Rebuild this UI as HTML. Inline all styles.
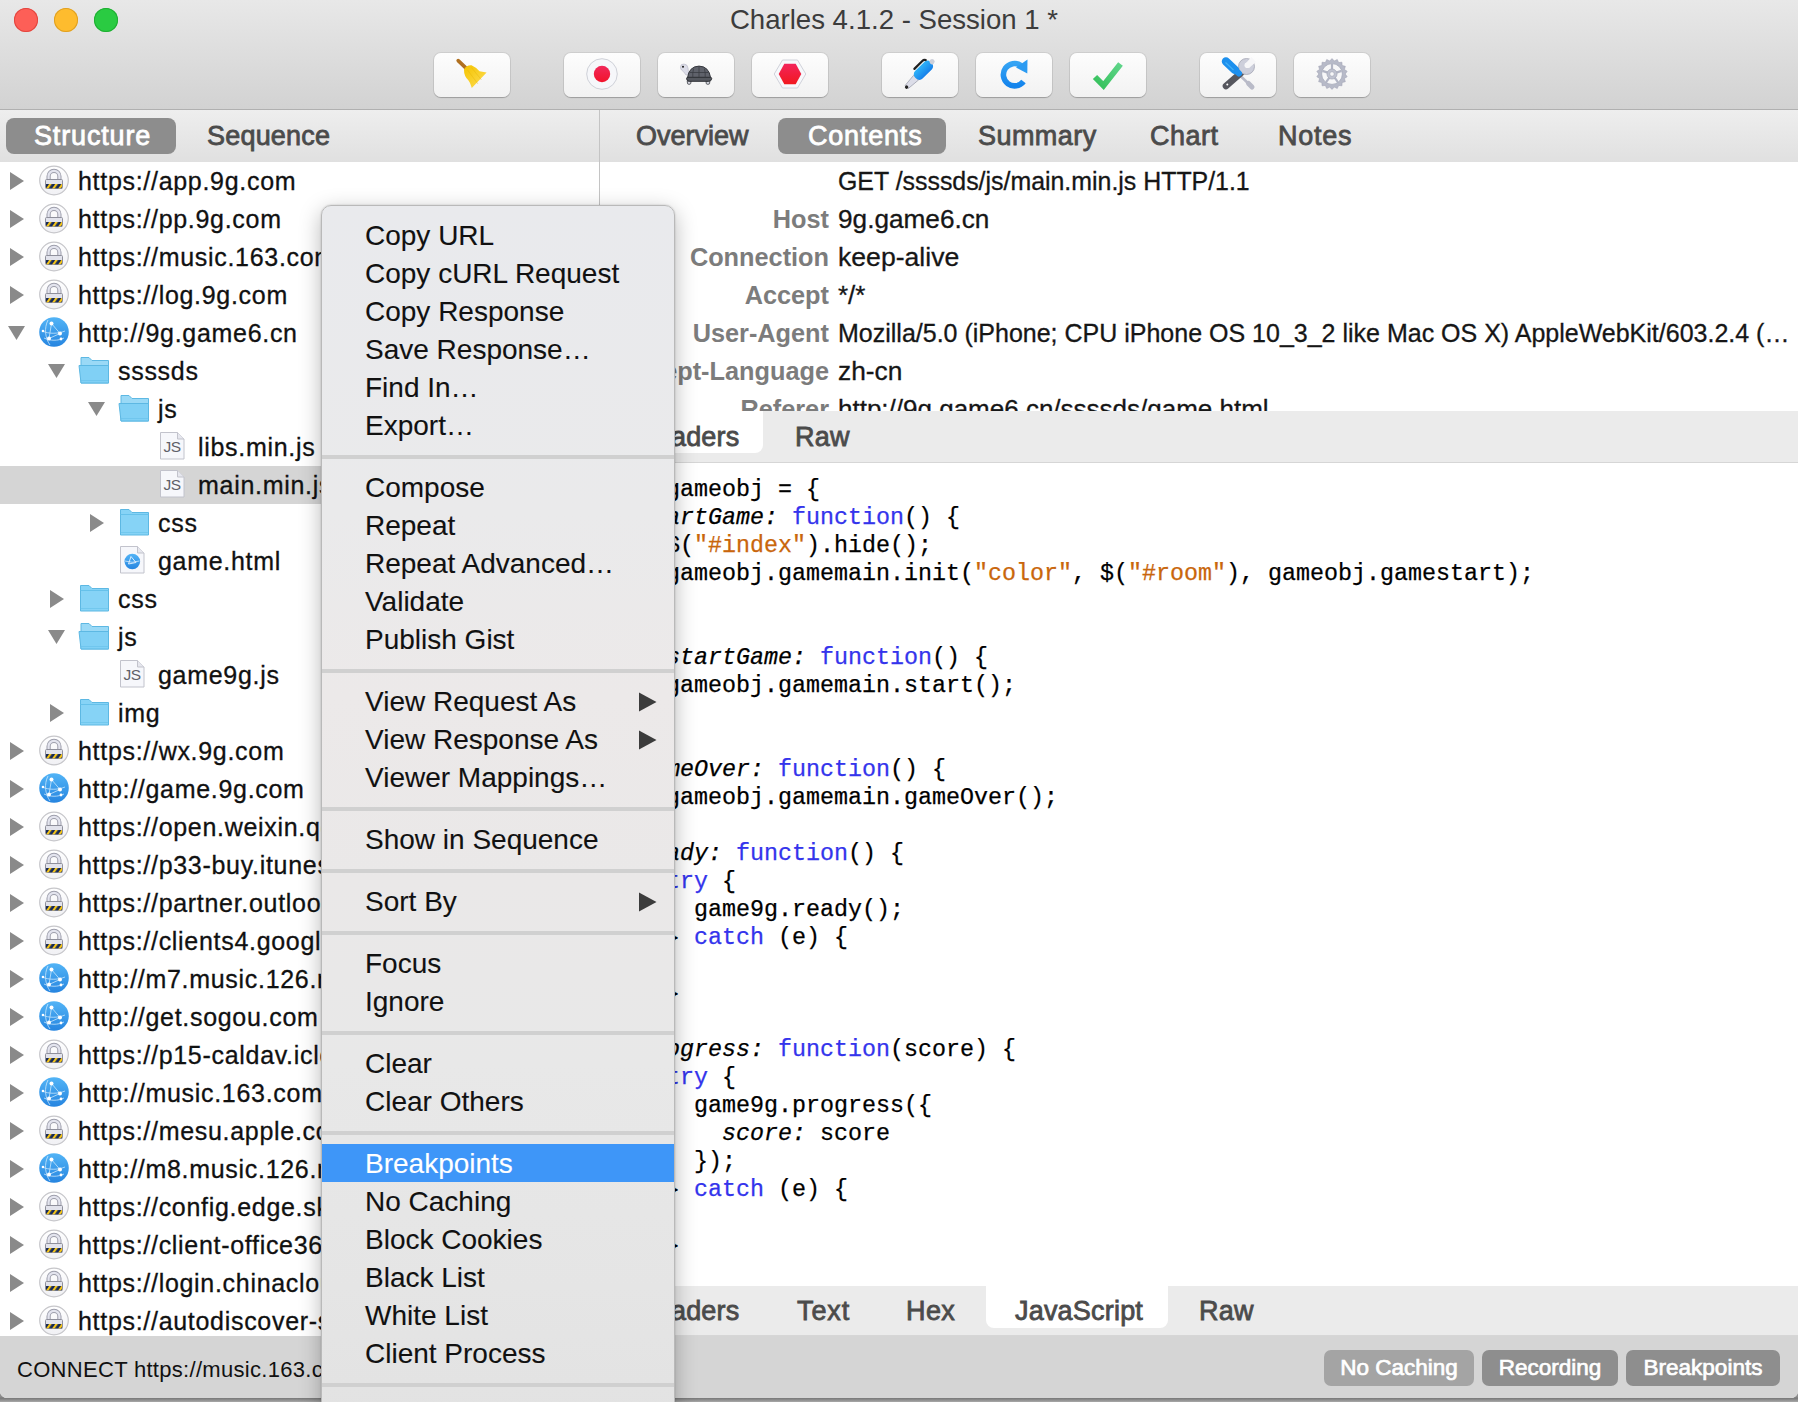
<!DOCTYPE html><html><head><meta charset="utf-8"><style>
*{margin:0;padding:0;box-sizing:border-box}
html,body{width:1798px;height:1402px;overflow:hidden;background:linear-gradient(to bottom,#8d8d8d 0,#8d8d8d 1397px,#777 1398px,#a8a8a8 1402px);font-family:"Liberation Sans",sans-serif}
#win{position:absolute;left:0;top:0;width:1798px;height:1398px;background:#fff;border-radius:0 0 7px 7px;overflow:hidden}
.a{position:absolute;white-space:nowrap}
#toolbar{position:absolute;left:0;top:0;width:1798px;height:110px;background:linear-gradient(#e8e8e8,#d2d2d2);border-bottom:1px solid #b0b0b0}
.tl{position:absolute;top:8px;width:24px;height:24px;border-radius:50%}
#title{position:absolute;left:-5px;width:1798px;top:0;text-align:center;font-size:27.6px;color:#3c3c3c;line-height:40px}
.btn{position:absolute;top:53px;width:76px;height:44px;border-radius:7px;background:linear-gradient(#fdfdfd,#f2f2f2);box-shadow:0 0 0 1px rgba(0,0,0,.07),0 1px 1px rgba(0,0,0,.2)}
.btn svg{position:absolute;left:0;top:0}
.tabbar{position:absolute;top:110px;height:52px;background:linear-gradient(#eeeeee,#e0e0e0)}
.pill{position:absolute;top:8px;height:36px;border-radius:8px;background:#8d8d8d}
.tab{position:absolute;top:0;height:52px;line-height:53px;font-size:27px;color:#4b4b4b;-webkit-text-stroke:0.8px #4b4b4b;letter-spacing:0.2px;white-space:nowrap}
.tab.sel{color:#fff;-webkit-text-stroke:0.8px #fff}
#tree{position:absolute;left:0;top:162px;width:599px;height:1174px;background:#fff;overflow:hidden}
.row{position:absolute;left:0;width:599px;height:38px}
.row .t{position:absolute;top:0;line-height:38px;font-size:25px;letter-spacing:0.7px;color:#111;-webkit-text-stroke:0.3px #111;white-space:nowrap}
.row svg{position:absolute;top:0;left:0}
#divider{position:absolute;left:599px;top:110px;width:1px;height:1226px;background:#c4c4c4}
#status{position:absolute;left:0;top:1336px;width:1798px;height:62px;background:#d5d5d5}
.hk{position:absolute;right:969px;height:38px;line-height:38px;font-size:25.3px;font-weight:bold;color:#7c7c7c;white-space:nowrap}
.hv{position:absolute;left:238px;height:38px;line-height:38px;font-size:25px;color:#161616;-webkit-text-stroke:0.3px #161616;white-space:nowrap}
.subbar{position:absolute;left:600px;width:1198px;background:#ebebeb;border-bottom:1px solid #d6d6d6}
.stab{position:absolute;line-height:52px;font-size:27px;color:#4b4b4b;-webkit-text-stroke:0.8px #4b4b4b;letter-spacing:0.2px;white-space:nowrap}
.cl{position:absolute;left:10px;height:28px;line-height:28px;font-family:"Liberation Mono",monospace;font-size:23.33px;color:#000;-webkit-text-stroke:0.25px currentColor;white-space:pre}
.kw{color:#3434ec}.st{color:#c9660c}.it{font-style:italic}
#status .txt{position:absolute;left:17px;top:0;line-height:67px;font-size:22px;letter-spacing:0.3px;color:#111;white-space:nowrap}
.spill{position:absolute;top:14px;height:36px;border-radius:7px;background:#8e8e8e;color:#fff;font-size:22.5px;-webkit-text-stroke:0.7px #fff;line-height:36px;text-align:center;white-space:nowrap}
#menu{position:absolute;left:321px;top:205px;width:354px;height:1230px;border-radius:10px;background:linear-gradient(#e9eaed 0%,#eaeaeb 25%,#ece9e9 40%,#eae8e8 55%,#e8e8e8 70%,#e5e5e5 88%,#e2e2e2 100%);border:1px solid #b9b9b9;box-shadow:0 6px 22px rgba(0,0,0,.28),0 0 2px rgba(0,0,0,.2)}
.mi{position:absolute;left:43px;height:38px;line-height:38px;font-size:28px;color:#111;-webkit-text-stroke:0.1px #111;white-space:nowrap}
.mi.sel{color:#fff;-webkit-text-stroke:0.1px #fff}
.mhl{position:absolute;left:0;width:352px;height:38px;background:#3e96f8}
.msep{position:absolute;left:0;width:352px;height:4px;background:#d0d0d0}
.marr{position:absolute;left:316px}

</style></head><body><div id="win">
<div id="toolbar">
<div class="tl" style="left:14px;background:#fd5f57;box-shadow:inset 0 0 0 1px #e2463f"></div>
<div class="tl" style="left:54px;background:#febc2e;box-shadow:inset 0 0 0 1px #dfa023"></div>
<div class="tl" style="left:94px;background:#2acb42;box-shadow:inset 0 0 0 1px #1fae32"></div>
<div id="title">Charles 4.1.2 - Session 1 *</div>
<div class="btn" style="left:434px"><svg width="76" height="44"><defs><linearGradient id="gBroom" x1="0" y1="0" x2="1" y2="1"><stop offset="0" stop-color="#f5c400"/><stop offset="1" stop-color="#fddd55"/></linearGradient></defs>
<path d="M24.2 7.6 L31.5 14.6" stroke="#b07020" stroke-width="3.6" stroke-linecap="round"/>
<path d="M30 16.5 Q32.5 12 37.5 12.3 Q42 14.3 45.5 18.3 L52.6 19.4 L37.8 35 Q36.3 29.5 34.5 27.5 Q29.8 23 30 16.5 Z" fill="url(#gBroom)"/>
<path d="M33.5 17 L44 31 M37.5 14.5 L47.5 27" stroke="#e6b000" stroke-width="0.7" opacity=".5"/>
</svg></div>
<div class="btn" style="left:564px"><svg width="76" height="44"><defs><linearGradient id="gRec" x1="0" y1="0" x2="0" y2="1"><stop offset="0" stop-color="#f0285a"/><stop offset="1" stop-color="#f2132b"/></linearGradient></defs>
<circle cx="38" cy="21" r="15.3" fill="#f6f7fa" stroke="#cfd1d8" stroke-width="1"/>
<circle cx="38" cy="21" r="8.2" fill="url(#gRec)"/></svg></div>
<div class="btn" style="left:658px"><svg width="76" height="44">
<path d="M22.5 14 Q22.5 10.8 26 11 Q29.5 11.2 30 15 Q30.6 18.5 30.5 21.5 L28 22 Q25.5 18 23.5 17 Q22.4 16 22.5 14 Z" fill="#dcdde8" stroke="#b5b6c4" stroke-width="0.6"/>
<circle cx="25" cy="13.8" r="1" fill="#1a1a1a"/>
<path d="M29.2 28 L29.6 30.8 Q31 32 32.6 30.8 L33.2 28 Z" fill="#d6d7e0" stroke="#505258" stroke-width="0.9"/>
<path d="M48 28 L48.3 30.8 Q49.9 32 51.5 30.8 L51.9 28 Z" fill="#d6d7e0" stroke="#505258" stroke-width="0.9"/>
<path d="M29.5 24.8 Q31 13.4 41 13.1 Q51 13.4 52.6 24.8 Z" fill="#5f626b" stroke="#34363c" stroke-width="1"/>
<path d="M28.6 25.4 Q28.6 24.3 30 24.3 H52.2 Q53.7 24.3 53.7 25.5 Q53.5 28.3 50.5 28.3 H31.5 Q28.6 28.3 28.6 25.4 Z" fill="#55585f" stroke="#2e3035" stroke-width="1"/>
<path d="M35.5 15.8 Q34.5 20 34.8 24.3 M41 13.4 V24.3 M46.5 15.8 Q47.5 20 47.2 24.3 M31.5 19.5 H50.5" stroke="#3a3c42" stroke-width="0.8" fill="none"/>
</svg></div>
<div class="btn" style="left:752px"><svg width="76" height="44"><defs><linearGradient id="gHex" x1="0" y1="0" x2="0" y2="1"><stop offset="0" stop-color="#f3245b"/><stop offset="1" stop-color="#f1181f"/></linearGradient></defs>
<path d="M30.5 7 H45.5 L53.8 21 L45.5 35 H30.5 L22.2 21 Z" fill="#f7f8fb" stroke="#d0d2da" stroke-width="1"/>
<path d="M32.3 10.8 H43.7 L49.3 21 L43.7 31.2 H32.3 L26.7 21 Z" fill="url(#gHex)"/></svg></div>
<div class="btn" style="left:882px"><svg width="76" height="44"><defs><linearGradient id="gPen" x1="0" y1="0" x2="0" y2="1"><stop offset="0" stop-color="#2fb3f8"/><stop offset="1" stop-color="#1680ea"/></linearGradient></defs>
<g transform="translate(23.9,34.8) rotate(-45)">
<path d="M1.2 -2.2 L14.5 -3.4 L14.5 3.4 L1.2 2.2 Z" fill="#dcdde8" stroke="#a3a5b2" stroke-width="0.8"/>
<circle cx="1" cy="0" r="1.7" fill="#222"/>
<rect x="13.8" y="-5.3" width="22" height="10.6" rx="4.5" fill="url(#gPen)"/>
<circle cx="37" cy="0" r="2.6" fill="#cdd0da"/>
<path d="M19.4 -7.4 L30.6 -7.4 Q32.8 -7.4 33.6 -5.6" stroke="#222" stroke-width="2.2" fill="none" stroke-linecap="round"/>
</g></svg></div>
<div class="btn" style="left:976px"><svg width="76" height="44"><defs><linearGradient id="gRef" x1="0" y1="0" x2="0" y2="1"><stop offset="0" stop-color="#35a4f4"/><stop offset="1" stop-color="#1484ec"/></linearGradient></defs>
<path d="M47.5 28.5 A11.2 11.2 0 1 1 45 12.5" stroke="url(#gRef)" stroke-width="5.6" fill="none"/>
<path d="M40 14.5 L51.5 6.5 L51.3 20.5 Z" fill="#2b9bf2"/></svg></div>
<div class="btn" style="left:1070px"><svg width="76" height="44"><defs><linearGradient id="gChk" x1="0" y1="1" x2="1" y2="0"><stop offset="0" stop-color="#34c05a"/><stop offset="1" stop-color="#5fd58a"/></linearGradient></defs>
<path d="M25 24 L33.5 32.5 L50.5 11" stroke="url(#gChk)" stroke-width="6" fill="none" stroke-linejoin="miter"/></svg></div>
<div class="btn" style="left:1200px"><svg width="76" height="44">
<path d="M39.5 22 L51.5 33.5" stroke="#b9bbc8" stroke-width="2.6" stroke-linecap="round"/>
<path d="M48.5 30.5 L52 34" stroke="#b9bbc8" stroke-width="5" stroke-linecap="round"/>
<path d="M26 33 L42 19" stroke="#56575e" stroke-width="6.6" stroke-linecap="round"/>
<circle cx="46.5" cy="13.5" r="8" fill="#cdcfdb" stroke="#a4a6b4" stroke-width=".8"/>
<path d="M45 11 L51.5 4 L56 9 L49 15 Z" fill="#f6f6f8"/>
<circle cx="47.3" cy="12.3" r="2.8" fill="#f6f6f8"/>
<path d="M26 8.5 L35 17" stroke="#1d90ee" stroke-width="8.5" stroke-linecap="round"/>
<path d="M33 15 L39 20.5" stroke="#1d90ee" stroke-width="6" stroke-linecap="round"/>
<path d="M25.5 9.5 L33.5 17" stroke="#52bdf8" stroke-width="1.2" opacity=".7"/>
<circle cx="27.3" cy="31.6" r="1" fill="#fff"/></svg></div>
<div class="btn" style="left:1294px"><svg width="76" height="44"><polygon points="38.00,5.60 40.29,8.00 43.27,6.53 44.60,9.57 47.90,9.20 48.11,12.52 51.34,13.30 50.40,16.49 53.17,18.33 51.20,21.00 53.17,23.67 50.40,25.51 51.34,28.70 48.11,29.48 47.90,32.80 44.60,32.43 43.27,35.47 40.29,34.00 38.00,36.40 35.71,34.00 32.73,35.47 31.40,32.43 28.10,32.80 27.89,29.48 24.66,28.70 25.60,25.51 22.83,23.67 24.80,21.00 22.83,18.33 25.60,16.49 24.66,13.30 27.89,12.52 28.10,9.20 31.40,9.57 32.73,6.53 35.71,8.00" fill="#b7bac8" stroke="#a2a5b5" stroke-width="0.6"/>
<circle cx="38" cy="21" r="10.4" fill="#f7f7f8" stroke="#a6a9b9" stroke-width="0.8"/>
<path d="M38.00 16.50 L38.00 11.00" stroke="#b2b5c4" stroke-width="2.2"/><path d="M42.28 19.61 L47.51 17.91" stroke="#b2b5c4" stroke-width="2.2"/><path d="M40.65 24.64 L43.88 29.09" stroke="#b2b5c4" stroke-width="2.2"/><path d="M35.35 24.64 L32.12 29.09" stroke="#b2b5c4" stroke-width="2.2"/><path d="M33.72 19.61 L28.49 17.91" stroke="#b2b5c4" stroke-width="2.2"/><circle cx="38" cy="21" r="5" fill="#c0c3d0" stroke="#a6a9b9" stroke-width="0.8"/><circle cx="38" cy="21" r="2.3" fill="#f7f7f8" stroke="#a6a9b9" stroke-width="0.7"/></svg></div>
</div>
<div class="tabbar" style="left:0;width:599px">
<div class="pill" style="left:6px;width:170px"></div>
<div class="tab sel" style="left:34px;letter-spacing:0.85px">Structure</div>
<div class="tab" style="left:207px">Sequence</div>
</div>
<div class="tabbar" style="left:600px;width:1198px">
<div class="pill" style="left:178px;width:168px"></div>
<div class="tab" style="left:36px;letter-spacing:0.00px">Overview</div>
<div class="tab sel" style="left:208px;letter-spacing:0.80px">Contents</div>
<div class="tab" style="left:378px;letter-spacing:0.45px">Summary</div>
<div class="tab" style="left:550px;letter-spacing:0.50px">Chart</div>
<div class="tab" style="left:678px;letter-spacing:0.75px">Notes</div>
</div>
<div id="tree">
<div class="row" style="top:0px">
<svg width="120" height="38" style="left:0px" viewBox="0 0 120 38"><path d="M10 10 L24 19 L10 28 Z" fill="#8a8a8a"/></svg>
<svg width="40" height="38" style="left:34px" viewBox="0 0 40 38">
   <circle cx="20" cy="18.5" r="14.3" fill="url(#gLockBg)" stroke="#c6c6ca" stroke-width="1.2"/>
   <path d="M14.6 17.8 V14.2 A5.4 5.4 0 0 1 25.4 14.2 V17.8" fill="none" stroke="#9d9eab" stroke-width="4.2"/>
   <path d="M14.6 17.8 V14.2 A5.4 5.4 0 0 1 25.4 14.2 V17.8" fill="none" stroke="#e3e4ee" stroke-width="2.2"/>
   <rect x="11.5" y="17.5" width="17" height="9" rx="1" fill="#e2e3ec" stroke="#8f909c" stroke-width="1"/>
   <rect x="12" y="22" width="16" height="4.3" fill="url(#pStripe)"/>
 </svg>
<div class="t" style="left:78px">https://app.9g.com</div>
</div>
<div class="row" style="top:38px">
<svg width="120" height="38" style="left:0px" viewBox="0 0 120 38"><path d="M10 10 L24 19 L10 28 Z" fill="#8a8a8a"/></svg>
<svg width="40" height="38" style="left:34px" viewBox="0 0 40 38">
   <circle cx="20" cy="18.5" r="14.3" fill="url(#gLockBg)" stroke="#c6c6ca" stroke-width="1.2"/>
   <path d="M14.6 17.8 V14.2 A5.4 5.4 0 0 1 25.4 14.2 V17.8" fill="none" stroke="#9d9eab" stroke-width="4.2"/>
   <path d="M14.6 17.8 V14.2 A5.4 5.4 0 0 1 25.4 14.2 V17.8" fill="none" stroke="#e3e4ee" stroke-width="2.2"/>
   <rect x="11.5" y="17.5" width="17" height="9" rx="1" fill="#e2e3ec" stroke="#8f909c" stroke-width="1"/>
   <rect x="12" y="22" width="16" height="4.3" fill="url(#pStripe)"/>
 </svg>
<div class="t" style="left:78px">https://pp.9g.com</div>
</div>
<div class="row" style="top:76px">
<svg width="120" height="38" style="left:0px" viewBox="0 0 120 38"><path d="M10 10 L24 19 L10 28 Z" fill="#8a8a8a"/></svg>
<svg width="40" height="38" style="left:34px" viewBox="0 0 40 38">
   <circle cx="20" cy="18.5" r="14.3" fill="url(#gLockBg)" stroke="#c6c6ca" stroke-width="1.2"/>
   <path d="M14.6 17.8 V14.2 A5.4 5.4 0 0 1 25.4 14.2 V17.8" fill="none" stroke="#9d9eab" stroke-width="4.2"/>
   <path d="M14.6 17.8 V14.2 A5.4 5.4 0 0 1 25.4 14.2 V17.8" fill="none" stroke="#e3e4ee" stroke-width="2.2"/>
   <rect x="11.5" y="17.5" width="17" height="9" rx="1" fill="#e2e3ec" stroke="#8f909c" stroke-width="1"/>
   <rect x="12" y="22" width="16" height="4.3" fill="url(#pStripe)"/>
 </svg>
<div class="t" style="left:78px">https://music.163.com</div>
</div>
<div class="row" style="top:114px">
<svg width="120" height="38" style="left:0px" viewBox="0 0 120 38"><path d="M10 10 L24 19 L10 28 Z" fill="#8a8a8a"/></svg>
<svg width="40" height="38" style="left:34px" viewBox="0 0 40 38">
   <circle cx="20" cy="18.5" r="14.3" fill="url(#gLockBg)" stroke="#c6c6ca" stroke-width="1.2"/>
   <path d="M14.6 17.8 V14.2 A5.4 5.4 0 0 1 25.4 14.2 V17.8" fill="none" stroke="#9d9eab" stroke-width="4.2"/>
   <path d="M14.6 17.8 V14.2 A5.4 5.4 0 0 1 25.4 14.2 V17.8" fill="none" stroke="#e3e4ee" stroke-width="2.2"/>
   <rect x="11.5" y="17.5" width="17" height="9" rx="1" fill="#e2e3ec" stroke="#8f909c" stroke-width="1"/>
   <rect x="12" y="22" width="16" height="4.3" fill="url(#pStripe)"/>
 </svg>
<div class="t" style="left:78px">https://log.9g.com</div>
</div>
<div class="row" style="top:152px">
<svg width="120" height="38" style="left:0px" viewBox="0 0 120 38"><path d="M8 12 L25 12 L16.5 26 Z" fill="#8a8a8a"/></svg>
<svg width="40" height="38" style="left:34px" viewBox="0 0 40 38">
   <circle cx="20" cy="18" r="14.8" fill="url(#gGlobe)"/>
   <g stroke="#d8efff" stroke-width="0.9" fill="none" opacity="0.8">
     <path d="M17.5 9.5 L26 19.5 L15 24.5 Z"/>
     <path d="M8.5 17 C14 20 24 20 31 17"/>
     <path d="M10 24 C16 27 24 27 30 24"/>
     <path d="M14 6 C10 14 11 24 16 31"/>
   </g>
   <g fill="#fff"><circle cx="17.5" cy="9.5" r="2"/><circle cx="26" cy="19.5" r="2"/><circle cx="15" cy="24.5" r="2"/><circle cx="9" cy="17" r="1.3"/><circle cx="27" cy="25" r="1.4"/></g>
 </svg>
<div class="t" style="left:78px">http://9g.game6.cn</div>
</div>
<div class="row" style="top:190px">
<svg width="120" height="38" style="left:40px" viewBox="0 0 120 38"><path d="M8 12 L25 12 L16.5 26 Z" fill="#8a8a8a"/></svg>
<svg width="40" height="38" style="left:74px" viewBox="0 0 40 38">
   <path d="M7 5.5 H15 L18 8.5 H34.5 V31 H7 Z" fill="#9ad9f6" stroke="#5db8e3" stroke-width="1"/>
   <path d="M5 13.5 H34.5 V31 H7 Z" fill="#80d0f5" stroke="#5db8e3" stroke-width="1"/>
   <path d="M7 28.5 H34.5" stroke="#66c1ea" stroke-width="1" opacity=".6"/>
 </svg>
<div class="t" style="left:118px">ssssds</div>
</div>
<div class="row" style="top:228px">
<svg width="120" height="38" style="left:80px" viewBox="0 0 120 38"><path d="M8 12 L25 12 L16.5 26 Z" fill="#8a8a8a"/></svg>
<svg width="40" height="38" style="left:114px" viewBox="0 0 40 38">
   <path d="M7 5.5 H15 L18 8.5 H34.5 V31 H7 Z" fill="#9ad9f6" stroke="#5db8e3" stroke-width="1"/>
   <path d="M5 13.5 H34.5 V31 H7 Z" fill="#80d0f5" stroke="#5db8e3" stroke-width="1"/>
   <path d="M7 28.5 H34.5" stroke="#66c1ea" stroke-width="1" opacity=".6"/>
 </svg>
<div class="t" style="left:158px">js</div>
</div>
<div class="row" style="top:266px">
<svg width="40" height="38" style="left:153px" viewBox="0 0 40 38">
   <path d="M7.5 4.5 H24.5 L31 11 V31 H7.5 Z" fill="#f6f7fb" stroke="#c2c3cc" stroke-width="1"/>
   <path d="M24.5 4.5 V11 H31" fill="#e6e7ee" stroke="#c2c3cc" stroke-width="1"/>
   <text x="10.6" y="23.8" font-family="Liberation Sans" font-size="15.5" letter-spacing="-0.6" fill="#5e6068">JS</text>
 </svg>
<div class="t" style="left:198px">libs.min.js</div>
</div>
<div class="row" style="top:304px;background:#d5d5d5">
<svg width="40" height="38" style="left:153px" viewBox="0 0 40 38">
   <path d="M7.5 4.5 H24.5 L31 11 V31 H7.5 Z" fill="#f6f7fb" stroke="#c2c3cc" stroke-width="1"/>
   <path d="M24.5 4.5 V11 H31" fill="#e6e7ee" stroke="#c2c3cc" stroke-width="1"/>
   <text x="10.6" y="23.8" font-family="Liberation Sans" font-size="15.5" letter-spacing="-0.6" fill="#5e6068">JS</text>
 </svg>
<div class="t" style="left:198px">main.min.js</div>
</div>
<div class="row" style="top:342px">
<svg width="120" height="38" style="left:80px" viewBox="0 0 120 38"><path d="M10 10 L24 19 L10 28 Z" fill="#8a8a8a"/></svg>
<svg width="40" height="38" style="left:114px" viewBox="0 0 40 38">
   <path d="M6.5 5.5 H15 L18 8.5 H34.5 V31 H6.5 Z" fill="#86d3f6" stroke="#5db8e3" stroke-width="1"/>
   <path d="M6.5 10.5 H34.5" stroke="#66c1ea" stroke-width="1"/>
   <path d="M6.5 28.5 H34.5" stroke="#66c1ea" stroke-width="1" opacity=".6"/>
 </svg>
<div class="t" style="left:158px">css</div>
</div>
<div class="row" style="top:380px">
<svg width="40" height="38" style="left:113px" viewBox="0 0 40 38">
   <path d="M7.5 4.5 H24.5 L31 11 V31 H7.5 Z" fill="#f6f7fb" stroke="#c2c3cc" stroke-width="1"/>
   <path d="M24.5 4.5 V11 H31" fill="#e6e7ee" stroke="#c2c3cc" stroke-width="1"/>
   <circle cx="19.3" cy="19.5" r="7.8" fill="url(#gGlobe)"/>
   <path d="M18 14.5 L23 20.5 L15.5 22 Z" fill="none" stroke="#e8f4ff" stroke-width="0.9"/>
   <path d="M12 19 Q19 21.5 26.5 19" fill="none" stroke="#e8f4ff" stroke-width="0.7"/>
 </svg>
<div class="t" style="left:158px">game.html</div>
</div>
<div class="row" style="top:418px">
<svg width="120" height="38" style="left:40px" viewBox="0 0 120 38"><path d="M10 10 L24 19 L10 28 Z" fill="#8a8a8a"/></svg>
<svg width="40" height="38" style="left:74px" viewBox="0 0 40 38">
   <path d="M6.5 5.5 H15 L18 8.5 H34.5 V31 H6.5 Z" fill="#86d3f6" stroke="#5db8e3" stroke-width="1"/>
   <path d="M6.5 10.5 H34.5" stroke="#66c1ea" stroke-width="1"/>
   <path d="M6.5 28.5 H34.5" stroke="#66c1ea" stroke-width="1" opacity=".6"/>
 </svg>
<div class="t" style="left:118px">css</div>
</div>
<div class="row" style="top:456px">
<svg width="120" height="38" style="left:40px" viewBox="0 0 120 38"><path d="M8 12 L25 12 L16.5 26 Z" fill="#8a8a8a"/></svg>
<svg width="40" height="38" style="left:74px" viewBox="0 0 40 38">
   <path d="M7 5.5 H15 L18 8.5 H34.5 V31 H7 Z" fill="#9ad9f6" stroke="#5db8e3" stroke-width="1"/>
   <path d="M5 13.5 H34.5 V31 H7 Z" fill="#80d0f5" stroke="#5db8e3" stroke-width="1"/>
   <path d="M7 28.5 H34.5" stroke="#66c1ea" stroke-width="1" opacity=".6"/>
 </svg>
<div class="t" style="left:118px">js</div>
</div>
<div class="row" style="top:494px">
<svg width="40" height="38" style="left:113px" viewBox="0 0 40 38">
   <path d="M7.5 4.5 H24.5 L31 11 V31 H7.5 Z" fill="#f6f7fb" stroke="#c2c3cc" stroke-width="1"/>
   <path d="M24.5 4.5 V11 H31" fill="#e6e7ee" stroke="#c2c3cc" stroke-width="1"/>
   <text x="10.6" y="23.8" font-family="Liberation Sans" font-size="15.5" letter-spacing="-0.6" fill="#5e6068">JS</text>
 </svg>
<div class="t" style="left:158px">game9g.js</div>
</div>
<div class="row" style="top:532px">
<svg width="120" height="38" style="left:40px" viewBox="0 0 120 38"><path d="M10 10 L24 19 L10 28 Z" fill="#8a8a8a"/></svg>
<svg width="40" height="38" style="left:74px" viewBox="0 0 40 38">
   <path d="M6.5 5.5 H15 L18 8.5 H34.5 V31 H6.5 Z" fill="#86d3f6" stroke="#5db8e3" stroke-width="1"/>
   <path d="M6.5 10.5 H34.5" stroke="#66c1ea" stroke-width="1"/>
   <path d="M6.5 28.5 H34.5" stroke="#66c1ea" stroke-width="1" opacity=".6"/>
 </svg>
<div class="t" style="left:118px">img</div>
</div>
<div class="row" style="top:570px">
<svg width="120" height="38" style="left:0px" viewBox="0 0 120 38"><path d="M10 10 L24 19 L10 28 Z" fill="#8a8a8a"/></svg>
<svg width="40" height="38" style="left:34px" viewBox="0 0 40 38">
   <circle cx="20" cy="18.5" r="14.3" fill="url(#gLockBg)" stroke="#c6c6ca" stroke-width="1.2"/>
   <path d="M14.6 17.8 V14.2 A5.4 5.4 0 0 1 25.4 14.2 V17.8" fill="none" stroke="#9d9eab" stroke-width="4.2"/>
   <path d="M14.6 17.8 V14.2 A5.4 5.4 0 0 1 25.4 14.2 V17.8" fill="none" stroke="#e3e4ee" stroke-width="2.2"/>
   <rect x="11.5" y="17.5" width="17" height="9" rx="1" fill="#e2e3ec" stroke="#8f909c" stroke-width="1"/>
   <rect x="12" y="22" width="16" height="4.3" fill="url(#pStripe)"/>
 </svg>
<div class="t" style="left:78px">https://wx.9g.com</div>
</div>
<div class="row" style="top:608px">
<svg width="120" height="38" style="left:0px" viewBox="0 0 120 38"><path d="M10 10 L24 19 L10 28 Z" fill="#8a8a8a"/></svg>
<svg width="40" height="38" style="left:34px" viewBox="0 0 40 38">
   <circle cx="20" cy="18" r="14.8" fill="url(#gGlobe)"/>
   <g stroke="#d8efff" stroke-width="0.9" fill="none" opacity="0.8">
     <path d="M17.5 9.5 L26 19.5 L15 24.5 Z"/>
     <path d="M8.5 17 C14 20 24 20 31 17"/>
     <path d="M10 24 C16 27 24 27 30 24"/>
     <path d="M14 6 C10 14 11 24 16 31"/>
   </g>
   <g fill="#fff"><circle cx="17.5" cy="9.5" r="2"/><circle cx="26" cy="19.5" r="2"/><circle cx="15" cy="24.5" r="2"/><circle cx="9" cy="17" r="1.3"/><circle cx="27" cy="25" r="1.4"/></g>
 </svg>
<div class="t" style="left:78px">http://game.9g.com</div>
</div>
<div class="row" style="top:646px">
<svg width="120" height="38" style="left:0px" viewBox="0 0 120 38"><path d="M10 10 L24 19 L10 28 Z" fill="#8a8a8a"/></svg>
<svg width="40" height="38" style="left:34px" viewBox="0 0 40 38">
   <circle cx="20" cy="18.5" r="14.3" fill="url(#gLockBg)" stroke="#c6c6ca" stroke-width="1.2"/>
   <path d="M14.6 17.8 V14.2 A5.4 5.4 0 0 1 25.4 14.2 V17.8" fill="none" stroke="#9d9eab" stroke-width="4.2"/>
   <path d="M14.6 17.8 V14.2 A5.4 5.4 0 0 1 25.4 14.2 V17.8" fill="none" stroke="#e3e4ee" stroke-width="2.2"/>
   <rect x="11.5" y="17.5" width="17" height="9" rx="1" fill="#e2e3ec" stroke="#8f909c" stroke-width="1"/>
   <rect x="12" y="22" width="16" height="4.3" fill="url(#pStripe)"/>
 </svg>
<div class="t" style="left:78px">https://open.weixin.qq.com</div>
</div>
<div class="row" style="top:684px">
<svg width="120" height="38" style="left:0px" viewBox="0 0 120 38"><path d="M10 10 L24 19 L10 28 Z" fill="#8a8a8a"/></svg>
<svg width="40" height="38" style="left:34px" viewBox="0 0 40 38">
   <circle cx="20" cy="18.5" r="14.3" fill="url(#gLockBg)" stroke="#c6c6ca" stroke-width="1.2"/>
   <path d="M14.6 17.8 V14.2 A5.4 5.4 0 0 1 25.4 14.2 V17.8" fill="none" stroke="#9d9eab" stroke-width="4.2"/>
   <path d="M14.6 17.8 V14.2 A5.4 5.4 0 0 1 25.4 14.2 V17.8" fill="none" stroke="#e3e4ee" stroke-width="2.2"/>
   <rect x="11.5" y="17.5" width="17" height="9" rx="1" fill="#e2e3ec" stroke="#8f909c" stroke-width="1"/>
   <rect x="12" y="22" width="16" height="4.3" fill="url(#pStripe)"/>
 </svg>
<div class="t" style="left:78px">https://p33-buy.itunes.apple.com</div>
</div>
<div class="row" style="top:722px">
<svg width="120" height="38" style="left:0px" viewBox="0 0 120 38"><path d="M10 10 L24 19 L10 28 Z" fill="#8a8a8a"/></svg>
<svg width="40" height="38" style="left:34px" viewBox="0 0 40 38">
   <circle cx="20" cy="18.5" r="14.3" fill="url(#gLockBg)" stroke="#c6c6ca" stroke-width="1.2"/>
   <path d="M14.6 17.8 V14.2 A5.4 5.4 0 0 1 25.4 14.2 V17.8" fill="none" stroke="#9d9eab" stroke-width="4.2"/>
   <path d="M14.6 17.8 V14.2 A5.4 5.4 0 0 1 25.4 14.2 V17.8" fill="none" stroke="#e3e4ee" stroke-width="2.2"/>
   <rect x="11.5" y="17.5" width="17" height="9" rx="1" fill="#e2e3ec" stroke="#8f909c" stroke-width="1"/>
   <rect x="12" y="22" width="16" height="4.3" fill="url(#pStripe)"/>
 </svg>
<div class="t" style="left:78px">https://partner.outlook.cn</div>
</div>
<div class="row" style="top:760px">
<svg width="120" height="38" style="left:0px" viewBox="0 0 120 38"><path d="M10 10 L24 19 L10 28 Z" fill="#8a8a8a"/></svg>
<svg width="40" height="38" style="left:34px" viewBox="0 0 40 38">
   <circle cx="20" cy="18.5" r="14.3" fill="url(#gLockBg)" stroke="#c6c6ca" stroke-width="1.2"/>
   <path d="M14.6 17.8 V14.2 A5.4 5.4 0 0 1 25.4 14.2 V17.8" fill="none" stroke="#9d9eab" stroke-width="4.2"/>
   <path d="M14.6 17.8 V14.2 A5.4 5.4 0 0 1 25.4 14.2 V17.8" fill="none" stroke="#e3e4ee" stroke-width="2.2"/>
   <rect x="11.5" y="17.5" width="17" height="9" rx="1" fill="#e2e3ec" stroke="#8f909c" stroke-width="1"/>
   <rect x="12" y="22" width="16" height="4.3" fill="url(#pStripe)"/>
 </svg>
<div class="t" style="left:78px">https://clients4.google.com</div>
</div>
<div class="row" style="top:798px">
<svg width="120" height="38" style="left:0px" viewBox="0 0 120 38"><path d="M10 10 L24 19 L10 28 Z" fill="#8a8a8a"/></svg>
<svg width="40" height="38" style="left:34px" viewBox="0 0 40 38">
   <circle cx="20" cy="18" r="14.8" fill="url(#gGlobe)"/>
   <g stroke="#d8efff" stroke-width="0.9" fill="none" opacity="0.8">
     <path d="M17.5 9.5 L26 19.5 L15 24.5 Z"/>
     <path d="M8.5 17 C14 20 24 20 31 17"/>
     <path d="M10 24 C16 27 24 27 30 24"/>
     <path d="M14 6 C10 14 11 24 16 31"/>
   </g>
   <g fill="#fff"><circle cx="17.5" cy="9.5" r="2"/><circle cx="26" cy="19.5" r="2"/><circle cx="15" cy="24.5" r="2"/><circle cx="9" cy="17" r="1.3"/><circle cx="27" cy="25" r="1.4"/></g>
 </svg>
<div class="t" style="left:78px">http://m7.music.126.net</div>
</div>
<div class="row" style="top:836px">
<svg width="120" height="38" style="left:0px" viewBox="0 0 120 38"><path d="M10 10 L24 19 L10 28 Z" fill="#8a8a8a"/></svg>
<svg width="40" height="38" style="left:34px" viewBox="0 0 40 38">
   <circle cx="20" cy="18" r="14.8" fill="url(#gGlobe)"/>
   <g stroke="#d8efff" stroke-width="0.9" fill="none" opacity="0.8">
     <path d="M17.5 9.5 L26 19.5 L15 24.5 Z"/>
     <path d="M8.5 17 C14 20 24 20 31 17"/>
     <path d="M10 24 C16 27 24 27 30 24"/>
     <path d="M14 6 C10 14 11 24 16 31"/>
   </g>
   <g fill="#fff"><circle cx="17.5" cy="9.5" r="2"/><circle cx="26" cy="19.5" r="2"/><circle cx="15" cy="24.5" r="2"/><circle cx="9" cy="17" r="1.3"/><circle cx="27" cy="25" r="1.4"/></g>
 </svg>
<div class="t" style="left:78px">http://get.sogou.com</div>
</div>
<div class="row" style="top:874px">
<svg width="120" height="38" style="left:0px" viewBox="0 0 120 38"><path d="M10 10 L24 19 L10 28 Z" fill="#8a8a8a"/></svg>
<svg width="40" height="38" style="left:34px" viewBox="0 0 40 38">
   <circle cx="20" cy="18.5" r="14.3" fill="url(#gLockBg)" stroke="#c6c6ca" stroke-width="1.2"/>
   <path d="M14.6 17.8 V14.2 A5.4 5.4 0 0 1 25.4 14.2 V17.8" fill="none" stroke="#9d9eab" stroke-width="4.2"/>
   <path d="M14.6 17.8 V14.2 A5.4 5.4 0 0 1 25.4 14.2 V17.8" fill="none" stroke="#e3e4ee" stroke-width="2.2"/>
   <rect x="11.5" y="17.5" width="17" height="9" rx="1" fill="#e2e3ec" stroke="#8f909c" stroke-width="1"/>
   <rect x="12" y="22" width="16" height="4.3" fill="url(#pStripe)"/>
 </svg>
<div class="t" style="left:78px">https://p15-caldav.icloud.com</div>
</div>
<div class="row" style="top:912px">
<svg width="120" height="38" style="left:0px" viewBox="0 0 120 38"><path d="M10 10 L24 19 L10 28 Z" fill="#8a8a8a"/></svg>
<svg width="40" height="38" style="left:34px" viewBox="0 0 40 38">
   <circle cx="20" cy="18" r="14.8" fill="url(#gGlobe)"/>
   <g stroke="#d8efff" stroke-width="0.9" fill="none" opacity="0.8">
     <path d="M17.5 9.5 L26 19.5 L15 24.5 Z"/>
     <path d="M8.5 17 C14 20 24 20 31 17"/>
     <path d="M10 24 C16 27 24 27 30 24"/>
     <path d="M14 6 C10 14 11 24 16 31"/>
   </g>
   <g fill="#fff"><circle cx="17.5" cy="9.5" r="2"/><circle cx="26" cy="19.5" r="2"/><circle cx="15" cy="24.5" r="2"/><circle cx="9" cy="17" r="1.3"/><circle cx="27" cy="25" r="1.4"/></g>
 </svg>
<div class="t" style="left:78px">http://music.163.com</div>
</div>
<div class="row" style="top:950px">
<svg width="120" height="38" style="left:0px" viewBox="0 0 120 38"><path d="M10 10 L24 19 L10 28 Z" fill="#8a8a8a"/></svg>
<svg width="40" height="38" style="left:34px" viewBox="0 0 40 38">
   <circle cx="20" cy="18.5" r="14.3" fill="url(#gLockBg)" stroke="#c6c6ca" stroke-width="1.2"/>
   <path d="M14.6 17.8 V14.2 A5.4 5.4 0 0 1 25.4 14.2 V17.8" fill="none" stroke="#9d9eab" stroke-width="4.2"/>
   <path d="M14.6 17.8 V14.2 A5.4 5.4 0 0 1 25.4 14.2 V17.8" fill="none" stroke="#e3e4ee" stroke-width="2.2"/>
   <rect x="11.5" y="17.5" width="17" height="9" rx="1" fill="#e2e3ec" stroke="#8f909c" stroke-width="1"/>
   <rect x="12" y="22" width="16" height="4.3" fill="url(#pStripe)"/>
 </svg>
<div class="t" style="left:78px">https://mesu.apple.com</div>
</div>
<div class="row" style="top:988px">
<svg width="120" height="38" style="left:0px" viewBox="0 0 120 38"><path d="M10 10 L24 19 L10 28 Z" fill="#8a8a8a"/></svg>
<svg width="40" height="38" style="left:34px" viewBox="0 0 40 38">
   <circle cx="20" cy="18" r="14.8" fill="url(#gGlobe)"/>
   <g stroke="#d8efff" stroke-width="0.9" fill="none" opacity="0.8">
     <path d="M17.5 9.5 L26 19.5 L15 24.5 Z"/>
     <path d="M8.5 17 C14 20 24 20 31 17"/>
     <path d="M10 24 C16 27 24 27 30 24"/>
     <path d="M14 6 C10 14 11 24 16 31"/>
   </g>
   <g fill="#fff"><circle cx="17.5" cy="9.5" r="2"/><circle cx="26" cy="19.5" r="2"/><circle cx="15" cy="24.5" r="2"/><circle cx="9" cy="17" r="1.3"/><circle cx="27" cy="25" r="1.4"/></g>
 </svg>
<div class="t" style="left:78px">http://m8.music.126.net</div>
</div>
<div class="row" style="top:1026px">
<svg width="120" height="38" style="left:0px" viewBox="0 0 120 38"><path d="M10 10 L24 19 L10 28 Z" fill="#8a8a8a"/></svg>
<svg width="40" height="38" style="left:34px" viewBox="0 0 40 38">
   <circle cx="20" cy="18.5" r="14.3" fill="url(#gLockBg)" stroke="#c6c6ca" stroke-width="1.2"/>
   <path d="M14.6 17.8 V14.2 A5.4 5.4 0 0 1 25.4 14.2 V17.8" fill="none" stroke="#9d9eab" stroke-width="4.2"/>
   <path d="M14.6 17.8 V14.2 A5.4 5.4 0 0 1 25.4 14.2 V17.8" fill="none" stroke="#e3e4ee" stroke-width="2.2"/>
   <rect x="11.5" y="17.5" width="17" height="9" rx="1" fill="#e2e3ec" stroke="#8f909c" stroke-width="1"/>
   <rect x="12" y="22" width="16" height="4.3" fill="url(#pStripe)"/>
 </svg>
<div class="t" style="left:78px">https://config.edge.skype.com</div>
</div>
<div class="row" style="top:1064px">
<svg width="120" height="38" style="left:0px" viewBox="0 0 120 38"><path d="M10 10 L24 19 L10 28 Z" fill="#8a8a8a"/></svg>
<svg width="40" height="38" style="left:34px" viewBox="0 0 40 38">
   <circle cx="20" cy="18.5" r="14.3" fill="url(#gLockBg)" stroke="#c6c6ca" stroke-width="1.2"/>
   <path d="M14.6 17.8 V14.2 A5.4 5.4 0 0 1 25.4 14.2 V17.8" fill="none" stroke="#9d9eab" stroke-width="4.2"/>
   <path d="M14.6 17.8 V14.2 A5.4 5.4 0 0 1 25.4 14.2 V17.8" fill="none" stroke="#e3e4ee" stroke-width="2.2"/>
   <rect x="11.5" y="17.5" width="17" height="9" rx="1" fill="#e2e3ec" stroke="#8f909c" stroke-width="1"/>
   <rect x="12" y="22" width="16" height="4.3" fill="url(#pStripe)"/>
 </svg>
<div class="t" style="left:78px">https://client-office365-tas.msedge.net</div>
</div>
<div class="row" style="top:1102px">
<svg width="120" height="38" style="left:0px" viewBox="0 0 120 38"><path d="M10 10 L24 19 L10 28 Z" fill="#8a8a8a"/></svg>
<svg width="40" height="38" style="left:34px" viewBox="0 0 40 38">
   <circle cx="20" cy="18.5" r="14.3" fill="url(#gLockBg)" stroke="#c6c6ca" stroke-width="1.2"/>
   <path d="M14.6 17.8 V14.2 A5.4 5.4 0 0 1 25.4 14.2 V17.8" fill="none" stroke="#9d9eab" stroke-width="4.2"/>
   <path d="M14.6 17.8 V14.2 A5.4 5.4 0 0 1 25.4 14.2 V17.8" fill="none" stroke="#e3e4ee" stroke-width="2.2"/>
   <rect x="11.5" y="17.5" width="17" height="9" rx="1" fill="#e2e3ec" stroke="#8f909c" stroke-width="1"/>
   <rect x="12" y="22" width="16" height="4.3" fill="url(#pStripe)"/>
 </svg>
<div class="t" style="left:78px">https://login.chinacloudapi.cn</div>
</div>
<div class="row" style="top:1140px">
<svg width="120" height="38" style="left:0px" viewBox="0 0 120 38"><path d="M10 10 L24 19 L10 28 Z" fill="#8a8a8a"/></svg>
<svg width="40" height="38" style="left:34px" viewBox="0 0 40 38">
   <circle cx="20" cy="18.5" r="14.3" fill="url(#gLockBg)" stroke="#c6c6ca" stroke-width="1.2"/>
   <path d="M14.6 17.8 V14.2 A5.4 5.4 0 0 1 25.4 14.2 V17.8" fill="none" stroke="#9d9eab" stroke-width="4.2"/>
   <path d="M14.6 17.8 V14.2 A5.4 5.4 0 0 1 25.4 14.2 V17.8" fill="none" stroke="#e3e4ee" stroke-width="2.2"/>
   <rect x="11.5" y="17.5" width="17" height="9" rx="1" fill="#e2e3ec" stroke="#8f909c" stroke-width="1"/>
   <rect x="12" y="22" width="16" height="4.3" fill="url(#pStripe)"/>
 </svg>
<div class="t" style="left:78px">https://autodiscover-s.outlook.com</div>
</div>
</div>
<div id="reqhdr" style="position:absolute;left:600px;top:162px;width:1198px;height:249px;background:#fff;overflow:hidden">
<div class="hv" style="top:0px;font-size:24.9px">GET /ssssds/js/main.min.js HTTP/1.1</div>
<div class="hk" style="top:38px">Host</div>
<div class="hv" style="top:38px;font-size:26.2px">9g.game6.cn</div>
<div class="hk" style="top:76px">Connection</div>
<div class="hv" style="top:76px;font-size:26.6px">keep-alive</div>
<div class="hk" style="top:114px">Accept</div>
<div class="hv" style="top:114px;font-size:26px">*/*</div>
<div class="hk" style="top:152px">User-Agent</div>
<div class="hv" style="top:152px;font-size:25.0px">Mozilla/5.0 (iPhone; CPU iPhone OS 10_3_2 like Mac OS X) AppleWebKit/603.2.4 (…</div>
<div class="hk" style="top:190px">Accept-Language</div>
<div class="hv" style="top:190px;font-size:26.3px">zh-cn</div>
<div class="hk" style="top:228px">Referer</div>
<div class="hv" style="top:228px;font-size:26px">http://9g.game6.cn/ssssds/game.html</div>
</div>
<div class="subbar" style="top:411px;height:52px"></div>
<div style="position:absolute;left:600px;top:411px;width:163px;height:42px;background:#fff;border-radius:0 0 8px 0"></div>
<div class="stab" style="left:636px;top:411px;letter-spacing:0.20px">Headers</div>
<div class="stab" style="left:795px;top:411px;letter-spacing:0.20px">Raw</div>
<div id="code" style="position:absolute;left:600px;top:463px;width:1198px;height:823px;background:#fff;overflow:hidden">
<div class="cl" style="top:13px">var gameobj = {</div>
<div class="cl" style="top:41px">  <span class="it">startGame:</span> <span class="kw">function</span>() {</div>
<div class="cl" style="top:69px">    &#36;(<span class="st">"#index"</span>).hide();</div>
<div class="cl" style="top:97px">    gameobj.gamemain.init(<span class="st">"color"</span>, &#36;(<span class="st">"#room"</span>), gameobj.gamestart);</div>
<div class="cl" style="top:125px">  },</div>
<div class="cl" style="top:153px"></div>
<div class="cl" style="top:181px">  <span class="it">restartGame:</span> <span class="kw">function</span>() {</div>
<div class="cl" style="top:209px">    gameobj.gamemain.start();</div>
<div class="cl" style="top:237px">  },</div>
<div class="cl" style="top:265px"></div>
<div class="cl" style="top:293px">  <span class="it">gameOver:</span> <span class="kw">function</span>() {</div>
<div class="cl" style="top:321px">    gameobj.gamemain.gameOver();</div>
<div class="cl" style="top:349px">  },</div>
<div class="cl" style="top:377px">  <span class="it">ready:</span> <span class="kw">function</span>() {</div>
<div class="cl" style="top:405px">    <span class="kw">try</span> {</div>
<div class="cl" style="top:433px">      game9g.ready();</div>
<div class="cl" style="top:461px">    } <span class="kw">catch</span> (e) {</div>
<div class="cl" style="top:489px"></div>
<div class="cl" style="top:517px">    }</div>
<div class="cl" style="top:545px">  },</div>
<div class="cl" style="top:573px">  <span class="it">progress:</span> <span class="kw">function</span>(score) {</div>
<div class="cl" style="top:601px">    <span class="kw">try</span> {</div>
<div class="cl" style="top:629px">      game9g.progress({</div>
<div class="cl" style="top:657px">        <span class="it">score:</span> score</div>
<div class="cl" style="top:685px">      });</div>
<div class="cl" style="top:713px">    } <span class="kw">catch</span> (e) {</div>
<div class="cl" style="top:741px"></div>
<div class="cl" style="top:769px">    }</div>
<div class="cl" style="top:797px">  },</div>
</div>
<div class="subbar" style="top:1286px;height:50px"></div>
<div style="position:absolute;left:986px;top:1286px;width:182px;height:42px;background:#fff;border-radius:0 0 8px 8px"></div>
<div class="stab" style="left:636px;top:1285px;letter-spacing:0.20px">Headers</div>
<div class="stab" style="left:797px;top:1285px;letter-spacing:0.90px">Text</div>
<div class="stab" style="left:906px;top:1285px;letter-spacing:0.40px">Hex</div>
<div class="stab" style="left:1015px;top:1285px;letter-spacing:0.20px">JavaScript</div>
<div class="stab" style="left:1199px;top:1285px;letter-spacing:0.20px">Raw</div>
<div id="divider"></div>
<div id="status"><div class="txt">CONNECT https://music.163.com:443</div><div class="spill" style="left:1324px;width:150px;background:#a4a4a4">No Caching</div><div class="spill" style="left:1482px;width:136px">Recording</div><div class="spill" style="left:1626px;width:154px">Breakpoints</div></div>
</div>
<div id="menu">
<div class="mi" style="top:11px">Copy URL</div>
<div class="mi" style="top:49px">Copy cURL Request</div>
<div class="mi" style="top:87px">Copy Response</div>
<div class="mi" style="top:125px">Save Response…</div>
<div class="mi" style="top:163px">Find In…</div>
<div class="mi" style="top:201px">Export…</div>
<div class="msep" style="top:249px"></div>
<div class="mi" style="top:263px">Compose</div>
<div class="mi" style="top:301px">Repeat</div>
<div class="mi" style="top:339px">Repeat Advanced…</div>
<div class="mi" style="top:377px">Validate</div>
<div class="mi" style="top:415px">Publish Gist</div>
<div class="msep" style="top:463px"></div>
<div class="mi" style="top:477px">View Request As</div>
<svg class="marr" style="top:486px" width="20" height="20"><path d="M1 0.5 L18.5 10 L1 19.5 Z" fill="#3c3c3c"/></svg>
<div class="mi" style="top:515px">View Response As</div>
<svg class="marr" style="top:524px" width="20" height="20"><path d="M1 0.5 L18.5 10 L1 19.5 Z" fill="#3c3c3c"/></svg>
<div class="mi" style="top:553px">Viewer Mappings…</div>
<div class="msep" style="top:601px"></div>
<div class="mi" style="top:615px">Show in Sequence</div>
<div class="msep" style="top:663px"></div>
<div class="mi" style="top:677px">Sort By</div>
<svg class="marr" style="top:686px" width="20" height="20"><path d="M1 0.5 L18.5 10 L1 19.5 Z" fill="#3c3c3c"/></svg>
<div class="msep" style="top:725px"></div>
<div class="mi" style="top:739px">Focus</div>
<div class="mi" style="top:777px">Ignore</div>
<div class="msep" style="top:825px"></div>
<div class="mi" style="top:839px">Clear</div>
<div class="mi" style="top:877px">Clear Others</div>
<div class="msep" style="top:925px"></div>
<div class="mhl" style="top:938px"></div>
<div class="mi sel" style="top:939px">Breakpoints</div>
<div class="mi" style="top:977px">No Caching</div>
<div class="mi" style="top:1015px">Block Cookies</div>
<div class="mi" style="top:1053px">Black List</div>
<div class="mi" style="top:1091px">White List</div>
<div class="mi" style="top:1129px">Client Process</div>
<div class="msep" style="top:1177px"></div>
<div class="mi" style="top:1191px"></div>
</div>

<svg width="0" height="0" style="position:absolute">
<defs>
 <linearGradient id="gLockBg" x1="0" y1="0" x2="0" y2="1"><stop offset="0" stop-color="#ffffff"/><stop offset="1" stop-color="#f0f0f4"/></linearGradient>
 <linearGradient id="gGlobe" x1="0" y1="0" x2="0" y2="1"><stop offset="0" stop-color="#52b4f6"/><stop offset="1" stop-color="#2685e0"/></linearGradient>
 <pattern id="pStripe" width="5" height="5" patternUnits="userSpaceOnUse" patternTransform="rotate(35)"><rect width="5" height="5" fill="#14285a"/><rect width="2.2" height="5" fill="#f5c518"/></pattern>
 
 
 
 
 
 
 
 
</defs></svg>

</body></html>
